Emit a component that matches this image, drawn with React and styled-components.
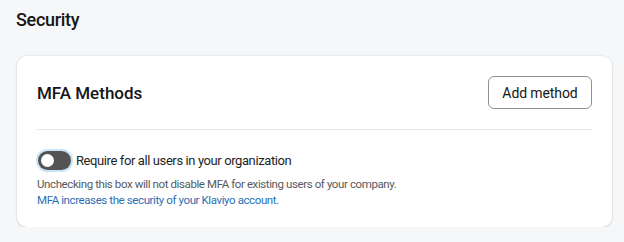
import React, { useState } from "react";
import styled, { createGlobalStyle } from "styled-components";

const GlobalStyle = createGlobalStyle`
  body {
    margin: 0;
    background-color: #f6f7f9;
    font-family: Roboto, "Liberation Sans", Arial, sans-serif;
    color: #1f1f1f;
  }
`;

const Page = styled.div`
  display: flex;
  flex-direction: column;
  padding: 9px 12px 0 17px;
  width: 624px;
  box-sizing: border-box;
`;

const PageTitle = styled.h1`
  margin: 0 0 0 -1px;
  font-size: 18px;
  font-weight: 500;
  line-height: 22px;
  letter-spacing: -0.3px;
  color: #161616;
`;

const Card = styled.section`
  margin-top: 25px;
  background-color: #ffffff;
  border-radius: 10px;
  box-shadow: 0 1px 3px rgba(0, 0, 0, 0.12), 0 0 0 1px rgba(0, 0, 0, 0.03);
  padding: 20px 20px 19px 20px;
  display: flex;
  flex-direction: column;
`;

const CardHeader = styled.div`
  display: flex;
  align-items: center;
  justify-content: space-between;
  padding-bottom: 20px;
  border-bottom: 1px solid #e7e8ea;
`;

const CardTitle = styled.h2`
  margin: 0;
  font-size: 17px;
  font-weight: 500;
  color: #161616;
`;

const OutlineButton = styled.button`
  height: 33px;
  width: 104px;
  border: 1px solid #8f8f8f;
  border-radius: 6px;
  background-color: #fff;
  font-family: inherit;
  font-size: 14px;
  letter-spacing: -0.1px;
  color: #161616;
  cursor: pointer;
`;

const ToggleRow = styled.label`
  display: flex;
  align-items: center;
  gap: 5px;
  margin-top: 21px;
  font-size: 13px;
  letter-spacing: -0.4px;
  color: #1f1f1f;
  cursor: pointer;
`;

const Track = styled.span`
  position: relative;
  display: inline-block;
  width: 33px;
  height: 19px;
  border-radius: 10px;
  background-color: ${(props) => (props.on ? "#2a6fb5" : "#545454")};
  box-shadow: 0 0 0 2px #c6e5f8;
  margin-left: 1px;
`;

const Knob = styled.span`
  position: absolute;
  top: 3px;
  left: ${(props) => (props.on ? "17px" : "3px")};
  width: 13px;
  height: 13px;
  border-radius: 50%;
  background-color: #fff;
`;

const Help = styled.p`
  margin: 6px 0 0 0;
  font-size: 11.5px;
  line-height: 16px;
  letter-spacing: -0.4px;
  color: #555a60;
`;

const HelpLink = styled.a`
  display: block;
  color: #2a6fb5;
  text-decoration: none;
`;

export default function App() {
  const [required, setRequired] = useState(false);
  return (
    <>
      <GlobalStyle />
      <Page>
        <PageTitle>Security</PageTitle>
        <Card>
          <CardHeader>
            <CardTitle>MFA Methods</CardTitle>
            <OutlineButton>Add method</OutlineButton>
          </CardHeader>
          <ToggleRow onClick={() => setRequired(!required)}>
            <Track on={required ? 1 : 0}>
              <Knob on={required ? 1 : 0} />
            </Track>
            Require for all users in your organization
          </ToggleRow>
          <Help>
            Unchecking this box will not disable MFA for existing users of your company.
            <HelpLink href="#">MFA increases the security of your Klaviyo account.</HelpLink>
          </Help>
        </Card>
      </Page>
    </>
  );
}
